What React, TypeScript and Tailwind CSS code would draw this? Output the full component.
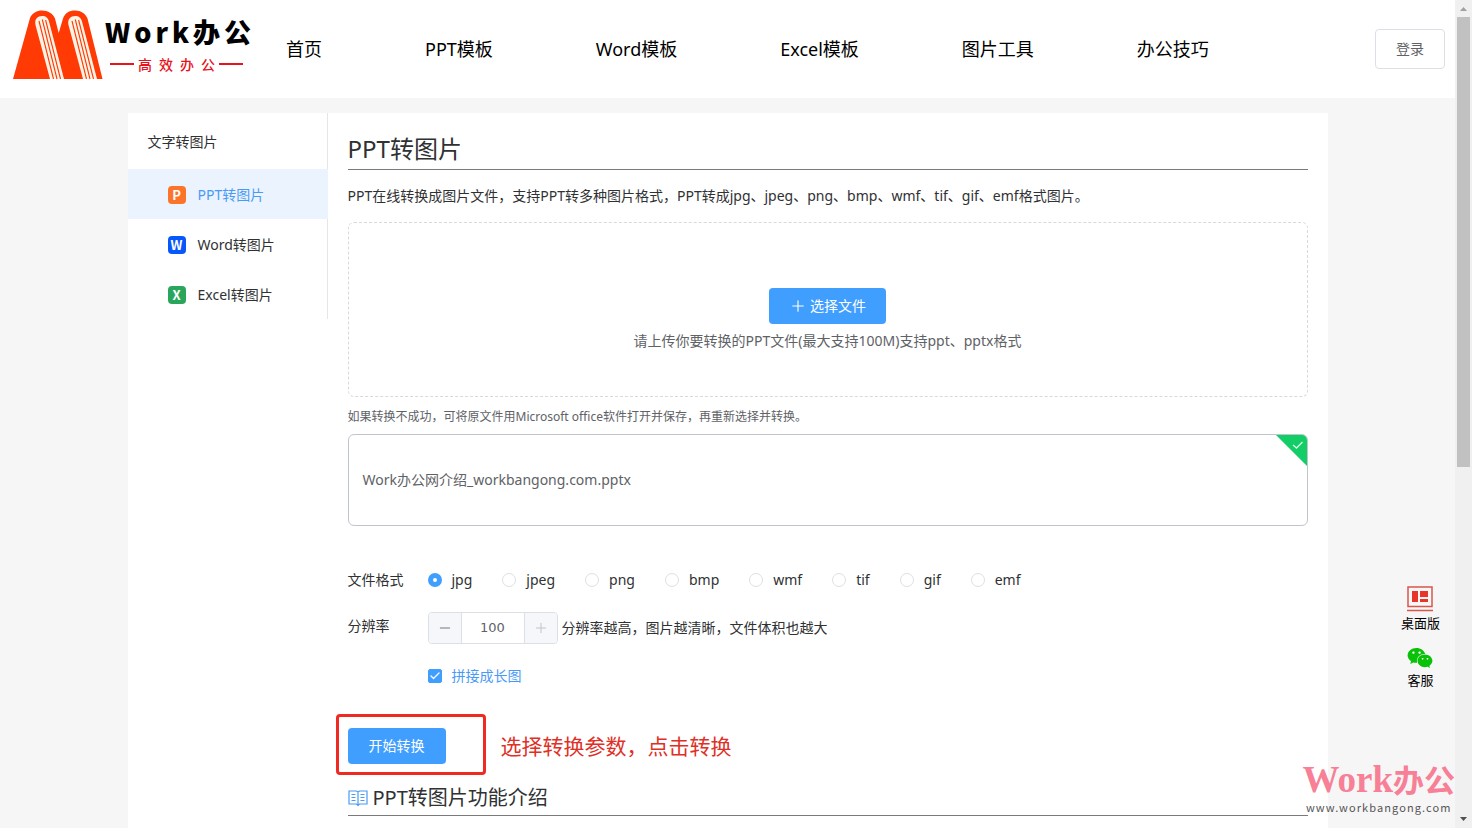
import React, { useState } from "react";
import { Check, Minus, Plus } from "lucide-react";
import { FaWeixin } from "react-icons/fa";
import clsx from "clsx";

const NAV_ITEMS = ["首页", "PPT模板", "Word模板", "Excel模板", "图片工具", "办公技巧"];

const FORMATS = ["jpg", "jpeg", "png", "bmp", "wmf", "tif", "gif", "emf"];

const TOOLS = [
  { letter: "P", label: "PPT转图片", color: "bg-[#fb7429]" },
  { letter: "W", label: "Word转图片", color: "bg-[#0757fb]" },
  { letter: "X", label: "Excel转图片", color: "bg-[#2aa65c]" },
];

const LogoMark = () => (
  <svg viewBox="0 0 91 70" className="h-[70px] w-[91px] shrink-0" aria-hidden="true">
    <path
      d="M1 69 18 8C20 3 25 .5 30 .5c6 0 11 3 13 8L46.7 23 51 8.500C53 3 57 .5 63 .5c6 0 10.500 3 12.500 8L90.500 69Z"
      fill="#ff3a05"
    />
    {[0, 33].map((x) => (
      <g key={x} transform={`translate(${x} 0)`}>
        <path d="M38 69 23.500 15C22 9 26 6 30 6c4 0 6 2 7 5.500L52 69Z" fill="#fff3e6" />
        <path
          d="M27 11 41.500 69M30.300 9.500 45 69M33.600 10 48.500 69"
          stroke="#ff3a05"
          strokeWidth="1.100"
          fill="none"
        />
      </g>
    ))}
  </svg>
);

const BookIcon = () => (
  <svg
    viewBox="0 0 20 18"
    className="h-[18px] w-5"
    fill="none"
    stroke="#4a9af5"
    strokeWidth="1.200"
    aria-hidden="true"
  >
    <path d="M1 2h7.500L10 3l1.500-1H19v13h-7.500L10 16.500 8.500 15H1ZM10 3v13" />
    <path d="M3.500 5.500h4M3.500 8.500h4M3.500 11.500h4M12.500 5.500h4M12.500 8.500h4M12.500 11.500h4" />
  </svg>
);

const DesktopIcon = () => (
  <svg viewBox="0 0 26 26" className="size-[26px]" aria-hidden="true">
    <path d="M1 1h24v19.500H1ZM0 24.500h26" fill="none" stroke="#d9564b" strokeWidth="1.500" />
    <path d="M5 5h6v11H5ZM13 5h8v6h-8ZM13 13h8v3h-8Z" fill="#e8352a" />
  </svg>
);

const Header = () => (
  <header className="flex h-[98px] shrink-0 items-center bg-white pr-[10px]">
    <a
      href="#"
      className="flex w-[254px] shrink-0 self-start pt-[10px] pl-3 font-['Noto_Sans_CJK_SC',sans-serif]"
    >
      <LogoMark />
      <span className="flex flex-col gap-1 pt-1 pl-[2px] whitespace-nowrap">
        <span className="text-[27px] leading-9 font-black tracking-[4px] text-black">
          Work办公
        </span>
        <span className="flex items-center gap-1 pl-[5px] text-sm leading-5 font-medium text-[#e8131b]">
          <span className="h-[2px] w-6 bg-[#e8131b]" />
          <span className="flex gap-[7px]">
            {["高", "效", "办", "公"].map((char) => (
              <span key={char}>{char}</span>
            ))}
          </span>
          <span className="h-[2px] w-6 bg-[#e8131b]" />
        </span>
      </span>
    </a>
    <nav className="ml-8 flex gap-[103px] text-lg whitespace-nowrap text-black">
      {NAV_ITEMS.map((item) => (
        <a key={item} href="#">
          {item}
        </a>
      ))}
    </nav>
    <button
      type="button"
      className="ml-auto h-10 w-[70px] rounded border border-[#dcdfe6] text-sm text-[#606266]"
    >
      登录
    </button>
  </header>
);

const Sidebar = () => (
  <aside className="w-[200px] shrink-0">
    <h2 className="h-14 border-r border-[#e6e6e6] pl-5 text-sm leading-[58px]">文字转图片</h2>
    {TOOLS.map((tool, index) => (
      <a
        key={tool.letter}
        href="#"
        className={clsx(
          "flex h-[50px] items-center border-r pt-px pl-10 text-sm",
          index === 0 ? "border-transparent bg-[#ebf3ff] text-[#4a9af5]" : "border-[#e6e6e6]"
        )}
      >
        <span
          className={clsx(
            "mr-3 flex size-[18px] items-center justify-center rounded pb-px font-['Noto_Sans_CJK_SC',sans-serif] text-[13px] leading-none font-bold text-white",
            tool.color
          )}
        >
          {tool.letter}
        </span>
        {tool.label}
      </a>
    ))}
  </aside>
);

const ConvertForm = () => {
  const [format, setFormat] = useState("jpg");
  const [dpi, setDpi] = useState(100);
  const [merge, setMerge] = useState(true);

  return (
    <form className="pt-11 text-sm" onSubmit={(e) => e.preventDefault()}>
      <fieldset className="flex h-5 items-center">
        <legend className="float-left w-20">文件格式</legend>
        <div className="flex gap-[30px]">
          {FORMATS.map((item) => (
            <label key={item} className="flex items-center gap-[10px]">
              <input
                type="radio"
                name="format"
                value={item}
                checked={format === item}
                onChange={() => setFormat(item)}
                className="size-[14px] appearance-none rounded-full border border-[#dcdfe6] bg-white checked:border-5 checked:border-[#409eff]"
              />
              {item}
            </label>
          ))}
        </div>
      </fieldset>

      <div className="mt-[22px] flex items-center">
        <label htmlFor="dpi" className="w-20 pb-1">
          分辨率
        </label>
        <div className="mr-1 flex h-8 w-[130px] overflow-hidden rounded border border-[#dcdfe6]">
          <button
            type="button"
            aria-label="减少"
            onClick={() => setDpi(Math.max(1, dpi - 1))}
            className="flex w-8 items-center justify-center bg-[#f5f7fa] text-[#606266]"
          >
            <Minus size={16} strokeWidth={1.25} />
          </button>
          <input
            id="dpi"
            type="text"
            value={dpi}
            onChange={(e) => setDpi(Number(e.target.value) || 0)}
            className="w-full min-w-0 flex-1 border-x border-[#dcdfe6] text-center font-['DejaVu_Sans',sans-serif] text-[13px] text-[#606266]"
          />
          <button
            type="button"
            aria-label="增加"
            disabled={dpi >= 100}
            onClick={() => setDpi(dpi + 1)}
            className="flex w-8 items-center justify-center bg-[#f5f7fa] text-[#606266] disabled:text-[#c0c4cc]"
          >
            <Plus size={16} strokeWidth={1.5} />
          </button>
        </div>
        分辨率越高，图片越清晰，文件体积也越大
      </div>

      <label className="mt-[22px] ml-20 flex h-5 w-fit items-center gap-[10px] text-[#4a9af5]">
        <span className="relative flex">
          <input
            type="checkbox"
            checked={merge}
            onChange={(e) => setMerge(e.target.checked)}
            className="size-[14px] appearance-none rounded-xs border border-[#dcdfe6] checked:border-[#409eff] checked:bg-[#409eff]"
          />
          {merge && (
            <Check
              size={12}
              strokeWidth={2.5}
              className="pointer-events-none absolute inset-0 m-auto text-white"
            />
          )}
        </span>
        拼接成长图
      </label>

      <div className="relative mt-[42px] w-fit">
        <button type="submit" className="block h-9 w-[98px] rounded bg-[#409eff] text-sm text-white">
          开始转换
        </button>
        {/* callout around the submit button */}
        <div className="pointer-events-none absolute -top-[14px] -left-3 flex items-center">
          <div className="h-[61px] w-[150px] rounded-sm border-3 border-[#ee2a22]" />
          <span className="ml-[15px] pt-[2px] text-[21px] whitespace-nowrap text-[#e02f26]">
            选择转换参数，点击转换
          </span>
        </div>
      </div>
    </form>
  );
};

const Converter = () => (
  <section className="min-w-0 flex-1 px-5">
    <h1 className="border-b border-[#7a7a7a] pt-[18px] pb-[2px] text-2xl leading-9">PPT转图片</h1>
    <p className="mt-4 text-sm leading-5">
      PPT在线转换成图片文件，支持PPT转多种图片格式，PPT转成jpg、jpeg、png、bmp、wmf、tif、gif、emf格式图片。
    </p>

    <div className="mt-4 flex h-[175px] flex-col items-center rounded-md border border-dashed border-[#d9d9d9] pt-[65px] text-sm text-[#606266]">
      <button
        type="button"
        className="flex h-9 items-center gap-[3px] rounded bg-[#409eff] px-5 text-white"
      >
        <Plus size={18} strokeWidth={1.5} />
        选择文件
      </button>
      <p className="mt-[7px] leading-5">请上传你要转换的PPT文件(最大支持100M)支持ppt、pptx格式</p>
    </div>

    <p className="mt-[10px] text-xs leading-5 text-[#606266]">
      如果转换不成功，可将原文件用Microsoft office软件打开并保存，再重新选择并转换。
    </p>

    <div className="relative mt-[7px] flex h-[92px] items-center overflow-hidden rounded-md border border-[#c0c4cc] px-[14px] text-sm text-[#606266]">
      Work办公网介绍_workbangong.com.pptx
      <svg viewBox="0 0 31 31" className="absolute top-0 right-0 size-[31px]" aria-hidden="true">
        <path d="M0 0h31v31Z" fill="#13ce66" />
        <path d="m17 10 3.500 3 6-6" fill="none" stroke="#d9fbe8" strokeWidth="1.300" />
      </svg>
    </div>

    <ConvertForm />

    <h2 className="mt-4 flex items-center gap-[5px] border-b border-[#7a7a7a] text-xl leading-[35px]">
      <BookIcon />
      PPT转图片功能介绍
    </h2>
  </section>
);

const SideTools = () => (
  <div className="absolute right-[15px] bottom-[139px] flex flex-col gap-[13px] text-[13px] leading-[18px] text-black">
    <a href="#" className="flex flex-col items-center gap-[2px]">
      <DesktopIcon />
      桌面版
    </a>
    <a href="#" className="flex flex-col items-center">
      <FaWeixin size={26} color="#09c107" />
      客服
    </a>
  </div>
);

const Watermark = () => (
  <div className="pointer-events-none absolute right-0 bottom-3 flex flex-col items-center whitespace-nowrap">
    <span className="font-['Liberation_Serif','Noto_Sans_CJK_SC',serif] text-[37px] leading-8 font-bold text-[#f77f96]">
      Work<span className="text-[31px]">办公</span>
    </span>
    <span className="font-['Noto_Sans_CJK_SC',sans-serif] text-[11px] leading-[18px] tracking-widest text-[#555]">
      www.workbangong.com
    </span>
  </div>
);

const Scrollbar = () => (
  <div className="flex w-[17px] shrink-0 flex-col items-center justify-between bg-[#f0f0f0]" aria-hidden="true">
    <div className="flex flex-col items-center">
      <svg viewBox="0 0 17 17" className="size-[17px]">
        <path d="M5 11h7L8.500 7Z" fill="#a0a0a0" />
      </svg>
      <div className="h-[450px] w-[13px] bg-[#c1c1c1]" />
    </div>
    <svg viewBox="0 0 17 17" className="size-[17px]">
      <path d="M5 6h7L8.500 10Z" fill="#505050" />
    </svg>
  </div>
);

export default function App() {
  return (
    <div className="flex h-screen overflow-hidden font-['Noto_Sans','Noto_Sans_CJK_SC',sans-serif] text-[#303133]">
      <div className="relative flex min-w-0 flex-1 flex-col overflow-hidden bg-[#f6f6f6]">
        <Header />
        <main className="mx-auto mt-[15px] flex w-full max-w-[1200px] flex-1 bg-white">
          <Sidebar />
          <Converter />
        </main>
        <SideTools />
        <Watermark />
      </div>
      <Scrollbar />
    </div>
  );
}
